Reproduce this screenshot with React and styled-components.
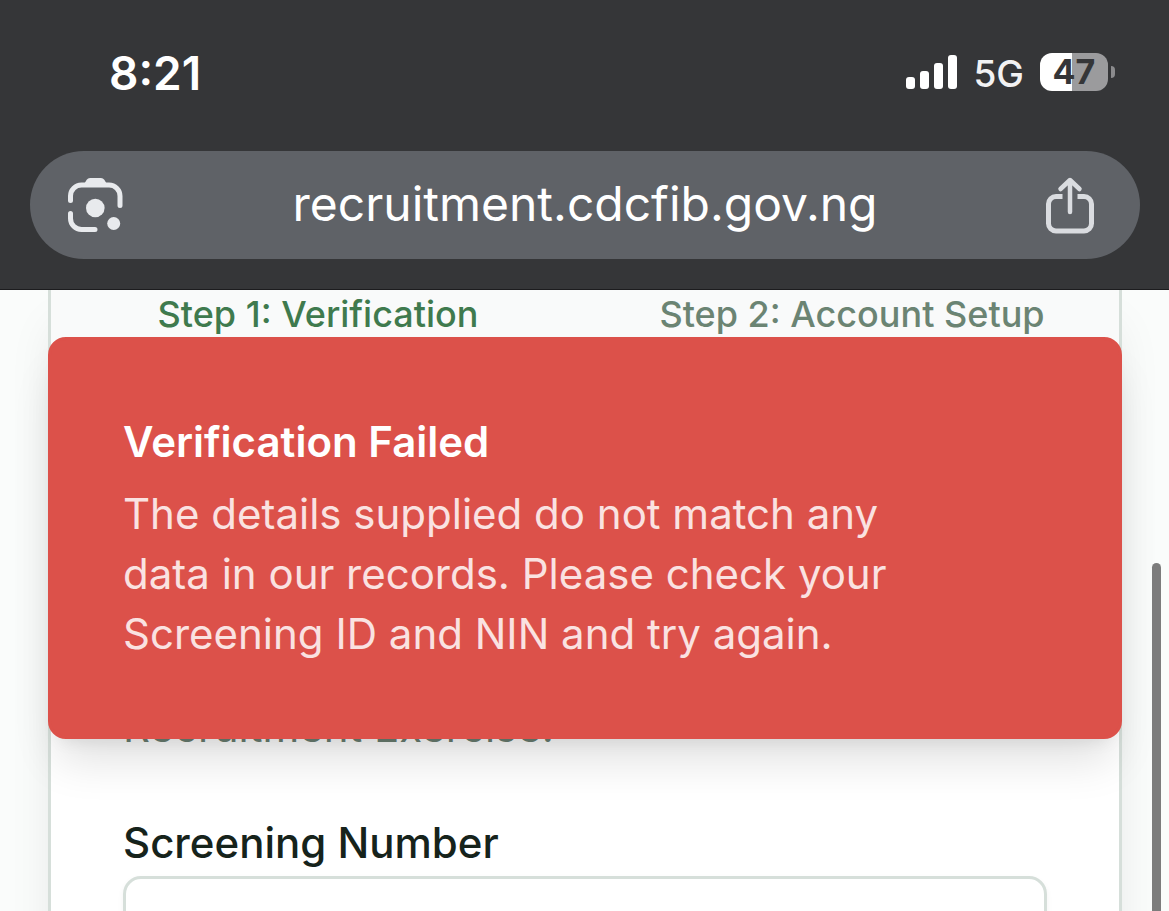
import React from "react";
import styled, { createGlobalStyle } from "styled-components";

const GlobalStyle = createGlobalStyle`
  *, *::before, *::after { box-sizing: border-box; }
  html, body { margin: 0; padding: 0; }
  body {
    font-family: Inter, "Liberation Sans", sans-serif;
    font-optical-sizing: none;
    background: #fafcfb;
  }
  button, input { font: inherit; }
`;

const Screen = styled.div`
  display: flex;
  flex-direction: column;
  height: 100vh;
  overflow: hidden;
`;

const BrowserHeader = styled.header`
  flex: none;
  display: flex;
  flex-direction: column;
  gap: 49px;
  padding: 42px 29px 30px 30px;
  background: #353638;
  border-bottom: 1px solid #1c1c1e;
`;

const StatusBar = styled.div`
  display: flex;
  align-items: center;
  justify-content: space-between;
  height: 60px;
  padding: 0 25px 0 79px;
  color: #fff;
`;

const Time = styled.time`
  padding-top: 2px;
  font-size: 46px;
  line-height: 60px;
  font-weight: 600;
`;

const Indicators = styled.div`
  display: flex;
  align-items: center;
`;

const Network = styled.span`
  margin: 0 16px;
  padding-top: 4px;
  font-size: 37px;
  line-height: 56px;
  font-weight: 500;
  color: #f2f2f3;
`;

const Battery = styled.div`
  display: flex;
  align-items: center;
  gap: 3px;
`;

const BatteryBody = styled.div`
  width: 68px;
  height: 38px;
  border-radius: 12px;
  background: linear-gradient(to right, #fff 47%, #9b9b9d 47%);
  color: #353638;
  font-size: 34px;
  line-height: 38px;
  font-weight: 700;
  text-align: center;
`;

const BatteryTip = styled.div`
  width: 4px;
  height: 12px;
  border-radius: 0 4px 4px 0;
  background: #8b8b8d;
`;

const AddressBar = styled.div`
  display: flex;
  align-items: center;
  height: 108px;
  padding: 0 40px;
  border-radius: 54px;
  background: #5f6267;
`;

const IconButton = styled.button`
  flex: none;
  display: flex;
  align-items: center;
  justify-content: center;
  width: 60px;
  height: 60px;
  padding: 0;
  border: 0;
  background: none;
  color: ${(p) => p.$tone};
`;

const Address = styled.input`
  flex: 1;
  min-width: 0;
  height: 72px;
  padding: 0 0 4px;
  border: 0;
  outline: 0;
  background: none;
  color: #fff;
  font-size: 48px;
  text-align: center;
`;

const Viewport = styled.main`
  position: relative;
  flex: 1;
  min-height: 0;
  overflow: hidden;
  padding: 0 47px 0 48px;
  background: #fafcfb;
`;

const Card = styled.section`
  border: solid #d6dfda;
  border-width: 0 3px;
  background: #fff;
  box-shadow: 0 30px 45px -9px rgba(0, 0, 0, 0.1);
`;

const Steps = styled.ol`
  display: grid;
  grid-template-columns: 1fr 1fr;
  margin: 0;
  padding: 0 0 12px;
  list-style: none;
  background: #f9fafa;
`;

const Step = styled.li`
  font-size: 36px;
  line-height: 48px;
  font-weight: 500;
  text-align: center;
  color: ${(p) => (p.$active ? "#3f7a4e" : "#6b8473")};
`;

const Form = styled.form`
  display: flex;
  flex-direction: column;
  padding: 347px 72px 72px;
`;

const Intro = styled.p`
  margin: 0 0 65px;
  font-size: 42px;
  line-height: 60px;
  color: #6b7f72;
`;

const Label = styled.label`
  margin-bottom: 12px;
  font-size: 42px;
  line-height: 42px;
  font-weight: 500;
  color: #16231b;
`;

const Field = styled.input`
  width: 100%;
  height: 120px;
  padding: 0 36px;
  border: 3px solid #d6dfda;
  border-radius: 18px;
  outline: 0;
  background: #fff;
  box-shadow: 0 3px 6px rgba(0, 0, 0, 0.05);
  font-size: 42px;
`;

const Toast = styled.div`
  position: absolute;
  top: 47px;
  left: 48px;
  right: 47px;
  padding: 72px 168px 72px 72px;
  border: 3px solid #dc514a;
  border-radius: 18px;
  background: #dc514a;
  box-shadow: 0 30px 45px -9px rgba(0, 0, 0, 0.12),
    0 12px 18px -12px rgba(0, 0, 0, 0.1);
  color: #fff;
  font-size: 42px;
  line-height: 60px;
`;

const ToastTitle = styled.h2`
  margin: 0 0 12px;
  font-size: 42px;
  line-height: 60px;
  font-weight: 600;
`;

const ToastText = styled.p`
  margin: 0;
  color: #fae2e1;
`;

const ScrollThumb = styled.div`
  position: absolute;
  top: 273px;
  right: 8px;
  bottom: -12px;
  width: 9px;
  border-radius: 5px;
  background: #7c7c7c;
`;

const SignalIcon = () => (
  <svg width="51" height="34" viewBox="0 0 51 34" fill="#fff" aria-hidden="true">
    <rect x="0" y="22" width="9" height="12" rx="3" />
    <rect x="14" y="16" width="9" height="18" rx="3" />
    <rect x="28" y="8" width="9" height="26" rx="3" />
    <rect x="42" y="0" width="9" height="34" rx="3" />
  </svg>
);

const LensIcon = () => (
  <svg width="60" height="60" viewBox="4 0 60 60" fill="none" aria-hidden="true">
    <g stroke="currentColor" strokeWidth="5" strokeLinecap="round">
      <path d="M4.500 25.500V21a11 11 0 0 1 11-11h27.500a11 11 0 0 1 11 11v9.500" />
      <path d="M4.500 38.500v5a11 11 0 0 0 11 11h13.500" />
    </g>
    <path
      d="M17.500 10l3.200-5.200a4 4 0 0 1 3.400-1.800h10.800a4 4 0 0 1 3.400 1.800l3.200 5.200z"
      fill="currentColor"
    />
    <circle cx="29.300" cy="33" r="9.300" fill="currentColor" />
    <circle cx="47.700" cy="48.500" r="6.500" fill="currentColor" />
  </svg>
);

const LensButton = styled(IconButton)`
  svg { overflow: visible; }
`;

const ShareIcon = () => (
  <svg
    width="60"
    height="60"
    viewBox="0 0 60 60"
    fill="none"
    stroke="currentColor"
    strokeWidth="5"
    aria-hidden="true"
  >
    <path d="M22.500 21.500H16a7.500 7.500 0 0 0-7.500 7.500v19.500A7.500 7.500 0 0 0 16 56h28a7.500 7.500 0 0 0 7.500-7.500V29a7.500 7.500 0 0 0-7.500-7.500h-6.500" />
    <path
      d="M30 37V5.500M20.500 14l9.500-9 9.500 9"
      strokeWidth="4.500"
      strokeLinecap="round"
      strokeLinejoin="round"
    />
  </svg>
);

export default function App() {
  return (
    <>
      <GlobalStyle />
      <Screen>
        <BrowserHeader>
          <StatusBar>
            <Time>8:21</Time>
            <Indicators>
              <SignalIcon />
              <Network>5G</Network>
              <Battery>
                <BatteryBody>47</BatteryBody>
                <BatteryTip />
              </Battery>
            </Indicators>
          </StatusBar>
          <AddressBar>
            <LensButton type="button" aria-label="Search with camera" $tone="#e8eaed">
              <LensIcon />
            </LensButton>
            <Address aria-label="Address" defaultValue="recruitment.cdcfib.gov.ng" />
            <IconButton type="button" aria-label="Share" $tone="#dadce0">
              <ShareIcon />
            </IconButton>
          </AddressBar>
        </BrowserHeader>
        <Viewport>
          <Card>
            <Steps>
              <Step $active>Step 1: Verification</Step>
              <Step>Step 2: Account Setup</Step>
            </Steps>
            <Form>
              <Intro>Recruitment Exercise.</Intro>
              <Label htmlFor="screening-number">Screening Number</Label>
              <Field id="screening-number" type="text" />
            </Form>
          </Card>
          <Toast role="alert">
            <ToastTitle>Verification Failed</ToastTitle>
            <ToastText>
              The details supplied do not match any data in our records. Please
              check your Screening ID and NIN and try again.
            </ToastText>
          </Toast>
          <ScrollThumb />
        </Viewport>
      </Screen>
    </>
  );
}
